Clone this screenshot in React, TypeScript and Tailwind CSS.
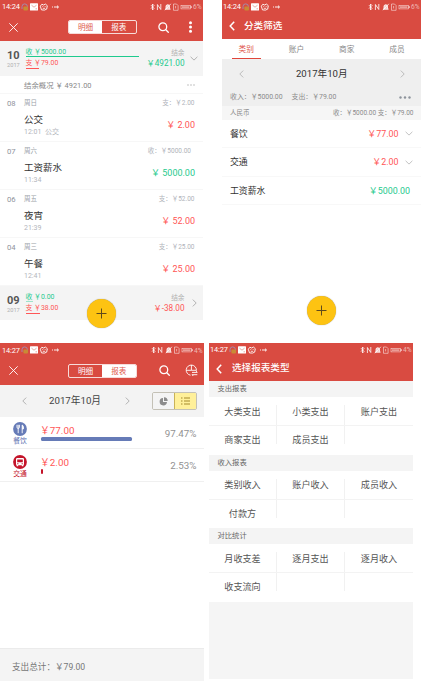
import type { ReactNode } from 'react';

const RED = 'bg-[#d94b41]';

function StatusBar({ time, battery, className = '' }: { time: string; battery: string; className?: string }) {
  return (
    <div className={`flex h-[13px] shrink-0 items-center pl-[2px] text-[7.4px] leading-none text-white ${className}`}>
      <span className="w-[19px] pt-px tracking-[-0.1px]">{time}</span>
      <svg className="h-2 w-[39px]" viewBox="0 0 39 8" fill="none">
        <path d="M1 6V3.6a2.7 2.7 0 0 1 5.4 0V6" stroke="#a58aa8" strokeWidth="1" />
        <rect x="2.4" y="3.6" width="4.6" height="3.8" rx="1" fill="#c98a35" />
        <rect x="9" y="0.2" width="8" height="7.4" rx="0.6" fill="#fff" />
        <path d="M10.5 2.2l2.5 2 2.5-2M14.5 5.8h1.5" stroke="#d98880" strokeWidth="0.7" />
        <path d="M19.3 3.2l1.6-2 1.6.8 2-.9 1.8 1.6-.6 3.4-2.2 1-3-.2z" stroke="#fff" strokeWidth="0.9" />
        <path d="M21.3 3.6h.9M23.7 3.6h.9M21.8 5.3h2.4" stroke="#fff" strokeWidth="0.8" />
        <path d="M31 4h1M33 4h4M36 2.7L37.6 4 36 5.3" stroke="#fff" strokeWidth="0.9" />
      </svg>
      <svg className="ml-auto h-2 w-[42px] shrink-0" viewBox="0 0 42 8" fill="none" stroke="#fff">
        <path d="M1 2.2l3 3.2L2.5 7V1L4 2.5 1 5.6" strokeWidth="0.8" />
        <path d="M7.4 7V1.5l3.4 5V1" strokeWidth="0.8" />
        <path d="M15.3 6.2h5l-.8-1V3.1a1.8 1.8 0 0 0-3.5 0v2.2zM15 7.2l5.8-6.4" fill="#fff" fillOpacity="0.7" strokeWidth="0.8" />
        <path d="M23.5 1h3l1.6 1.6v4.7h-4.6zM25.6 3v2.4" strokeWidth="0.6" strokeOpacity="0.85" />
        <rect x="31" y="2.3" width="9.4" height="3.6" strokeWidth="0.6" strokeOpacity="0.8" />
        <rect x="32" y="3.3" width="7.4" height="1.6" fill="#fff" fillOpacity="0.5" stroke="none" />
        <path d="M41.2 3.2v1.8" strokeWidth="0.8" />
      </svg>
      <span className="w-[11px] pt-[2px] pl-px text-[6.6px] text-white/60">{battery}</span>
    </div>
  );
}

function Close() {
  return (
    <svg className="h-[9px] w-[9px]" viewBox="0 0 9 9" fill="none" stroke="#fff" strokeWidth="0.9" strokeLinecap="round">
      <path d="M.6.6l7.8 7.8M8.4.6L.6 8.4" />
    </svg>
  );
}

function Search() {
  return (
    <svg className="h-[11px] w-[11px]" viewBox="0 0 11 11" fill="none" stroke="#fff" strokeWidth="1.3" strokeLinecap="round">
      <circle cx="4.8" cy="4.8" r="3.9" />
      <path d="M7.8 7.8l2.5 2.5" />
    </svg>
  );
}

function Chevron({ dir, className }: { dir: 'left' | 'right' | 'down'; className: string }) {
  if (dir === 'down') {
    return (
      <svg className={`h-[5px] w-2 ${className}`} viewBox="0 0 8 5" fill="none" stroke="currentColor" strokeWidth="0.9">
        <path d="M.6.8L4 4.1 7.4.8" />
      </svg>
    );
  }
  return (
    <svg className={`h-2 w-[5px] ${className}`} viewBox="0 0 5 8" fill="none" stroke="currentColor" strokeWidth="0.9">
      <path d={dir === 'left' ? 'M4.2.6L.8 4l3.4 3.4' : 'M.8.6L4.2 4 .8 7.4'} />
    </svg>
  );
}

function Toggle({ active }: { active: 0 | 1 }) {
  return (
    <div className="flex h-[14px] w-[68.5px] overflow-hidden rounded-[2px] border border-white/80 text-[7.6px]">
      {['明细', '报表'].map((t, i) => (
        <span
          key={t}
          className={`flex flex-1 items-center justify-center pt-px ${i === active ? 'bg-white text-[#e0594f]' : 'text-white'}`}
        >
          {t}
        </span>
      ))}
    </div>
  );
}

function Fab({ className }: { className: string }) {
  return (
    <div className={`absolute flex h-[29px] w-[29px] items-center justify-center rounded-full bg-[#fdc312] shadow-[0_0_1px_rgba(0,0,0,0.45)] ${className}`}>
      <svg className="h-[11px] w-[11px]" viewBox="0 0 11 11" stroke="#5f4a1c" strokeWidth="1">
        <path d="M5.5.5v10M.5 5.5h10" />
      </svg>
    </div>
  );
}

type Month = {
  month: string; income: string; expense: string; balance: string; balanceColor: string;
  incomeBar: string; expenseBar: string; arrow: 'down' | 'right';
};

function MonthSummary({ m, className }: { m: Month; className: string }) {
  return (
    <div className={`flex shrink-0 bg-[#f4f4f4] ${className}`}>
      <div className="w-[25.5px] pt-[8px] pl-[7px]">
        <div className="text-[11px] leading-[13px] font-bold text-[#555]">{m.month}</div>
        <div className="text-[5.7px] leading-[6px] text-[#b0b0b0]">2017</div>
      </div>
      <div className="w-[114px] pt-[7px] text-[6.9px] leading-[8px] whitespace-nowrap">
        <div className="text-[#1fca8e]">收 ￥{m.income}</div>
        <div className={`h-px bg-[#1fca8e] ${m.incomeBar}`} />
        <div className="pt-[2px] text-[#ff5656]">支 ￥{m.expense}</div>
        <div className={`mt-px h-px bg-[#ff5656] ${m.expenseBar}`} />
      </div>
      <div className="flex flex-1 flex-col items-end pt-[8px] whitespace-nowrap">
        <div className="text-[6.7px] leading-[9px] text-[#b0b0b0]">结余</div>
        <div className={`text-[8.2px] leading-[11px] ${m.balanceColor}`}>￥{m.balance}</div>
      </div>
      <div className="flex w-[18.5px] items-center justify-center pl-[1px]">
        <Chevron dir={m.arrow} className="text-[#aaa]" />
      </div>
    </div>
  );
}

const days = [
  { d: '08', w: '周日', total: '支：￥2.00', pad: 'pr-[8.5px]', name: '公交', sub: '12:01  公交', amount: '2.00', c: 'text-[#ff5656]' },
  { d: '07', w: '周六', total: '收：￥5000.00', pad: 'pr-[12px]', name: '工资薪水', sub: '11:34', amount: '5000.00', c: 'text-[#1fca8e]' },
  { d: '06', w: '周五', total: '支：￥52.00', pad: 'pr-[8.5px]', name: '夜宵', sub: '21:39', amount: '52.00', c: 'text-[#ff5656]' },
  { d: '04', w: '周三', total: '支：￥25.00', pad: 'pr-[8.5px]', name: '午餐', sub: '12:41', amount: '25.00', c: 'text-[#ff5656]' },
];

function DetailScreen() {
  return (
    <section className="relative flex h-[343px] w-[203px] shrink-0 flex-col">
      <header className={`h-[41px] shrink-0 ${RED}`}>
        <StatusBar time="14:24" battery="6%" />
        <div className="flex h-[28px] items-center pl-[9px]">
          <Close />
          <div className="ml-[50px]"><Toggle active={0} /></div>
          <div className="ml-[21px]"><Search /></div>
          <svg className="ml-[20px] h-3 w-[3px]" viewBox="0 0 3 12" fill="#fff">
            <circle cx="1.5" cy="1.7" r="1.5" /><circle cx="1.5" cy="6" r="1.5" /><circle cx="1.5" cy="10.3" r="1.5" />
          </svg>
        </div>
      </header>
      <MonthSummary
        className="h-[35px]"
        m={{ month: '10', income: '5000.00', expense: '79.00', balance: '4921.00', balanceColor: 'text-[#1fca8e]', incomeBar: 'w-[113.5px]', expenseBar: 'w-[13px]', arrow: 'down' }}
      />
      <div className="flex h-[18px] shrink-0 items-center border-b border-[#f7f7f7] pr-[8px] pl-[24px] text-[7.4px] text-[#888]">
        <span className="pt-[2px]">结余概况 ￥ 4921.00</span>
        <svg className="ml-auto h-[2px] w-[8px]" viewBox="0 0 8 2" fill="#bbb">
          <circle cx="1" cy="1" r="0.8" /><circle cx="4" cy="1" r="0.8" /><circle cx="7" cy="1" r="0.8" />
        </svg>
      </div>
      {days.map((x) => (
        <div key={x.d} className="h-12 shrink-0 border-b border-[#f7f7f7]">
          <div className="flex h-[18px] items-center pt-[2px] text-[6.5px] text-[#b0b3ba]">
            <span className="w-[24px] pl-[7px] text-[7.7px] text-[#8f939b]">{x.d}</span>
            <span className="text-[#9b9fa8]">{x.w}</span>
            <span className={`ml-auto ${x.pad}`}>{x.total}</span>
          </div>
          <div className="flex items-start pr-[8px] pl-[24px]">
            <div>
              <div className="pt-px text-[9.5px] leading-[14px] text-[#333]">{x.name}</div>
              <div className="text-[7px] leading-[10px] whitespace-pre text-[#b3b6bc]">{x.sub}</div>
            </div>
            <div className={`ml-auto pt-[7px] text-[9px] leading-[12px] ${x.c}`}>￥ {x.amount}</div>
          </div>
        </div>
      ))}
      <MonthSummary
        className="h-[34px]"
        m={{ month: '09', income: '0.00', expense: '38.00', balance: '-38.00', balanceColor: 'text-[#ff5656]', incomeBar: 'w-[7px] opacity-40', expenseBar: 'w-[14px]', arrow: 'right' }}
      />
      <Fab className="top-[299px] left-[87px]" />
    </section>
  );
}

function BackHeader({ title, className, titleGap, time, battery }: {
  title: string; className: string; titleGap: string; time: string; battery: string;
}) {
  return (
    <header className={`shrink-0 ${RED} ${className}`}>
      <StatusBar time={time} battery={battery} className="pl-px" />
      <div className="flex h-[25px] items-center pl-[7px] text-white">
        <svg className="h-[10px] w-[6px]" viewBox="0 0 6 10" fill="none" stroke="#fff" strokeWidth="1.5">
          <path d="M5.2.8L1.2 5l4 4.2" />
        </svg>
        <span className={`text-[9.6px] font-medium ${titleGap}`}>{title}</span>
      </div>
    </header>
  );
}

const categories = [
  { name: '餐饮', amount: '77.00', c: 'text-[#ff5656]', more: true },
  { name: '交通', amount: '2.00', c: 'text-[#ff5656]', more: true },
  { name: '工资薪水', amount: '5000.00', c: 'text-[#1fca8e]', more: false },
];

function FilterScreen() {
  return (
    <section className="relative flex h-[343px] w-[199px] shrink-0 flex-col">
      <BackHeader title="分类筛选" className="h-[39px]" titleGap="pt-px pl-[9px]" time="14:24" battery="6%" />
      <nav className="flex h-5 shrink-0 text-[7.7px] text-[#888]">
        {['类别', '账户', '商家', '成员'].map((t, i) => (
          <div key={t} className="flex w-[50.3px] shrink-0 flex-col items-center">
            <span className={`flex h-[18.6px] items-center pt-[2px] pr-[2px] ${i === 0 ? 'text-[#e0554b]' : ''}`}>{t}</span>
            {i === 0 && <span className="mr-[2px] h-[1.4px] w-[29px] bg-[#e0453b]" />}
          </div>
        ))}
      </nav>
      <div className="h-[47px] shrink-0 bg-[#efefef]">
        <div className="flex h-[29px] items-center justify-between pr-[16px] pl-[16.5px]">
          <Chevron dir="left" className="text-[#b5b5b5]" />
          <span className="pt-[2px] text-[9.6px] text-[#333]">2017年10月</span>
          <Chevron dir="right" className="text-[#b5b5b5]" />
        </div>
        <div className="flex h-[18px] items-center pt-px pr-[10px] pl-[8px] text-[6.9px] text-[#8b8b8b]">
          <span className="w-[61.5px] whitespace-nowrap">收入：￥5000.00</span>
          <span>支出：￥79.00</span>
          <svg className="mb-px ml-auto h-[3px] w-[12px]" viewBox="0 0 12 3" fill="#8d939b">
            <circle cx="1.5" cy="1.5" r="1.2" /><circle cx="6" cy="1.5" r="1.2" /><circle cx="10.5" cy="1.5" r="1.2" />
          </svg>
        </div>
      </div>
      <div className="flex h-[14px] shrink-0 items-center justify-between bg-[#f6f6f6] pt-px pr-[7.5px] pl-[8px] text-[6.5px] text-[#8b8b8b]">
        <span>人民币</span>
        <span>收：￥5000.00 支：￥79.00</span>
      </div>
      {categories.map((x) => (
        <div key={x.name} className="flex h-[28.4px] shrink-0 items-center border-b border-[#f8f8f8] pl-[8px] text-[8.9px]">
          <span className="pt-[2px] text-[#333]">{x.name}</span>
          <span className={`ml-auto pt-[2px] ${x.c} ${x.more ? '' : 'pr-[11px]'}`}>￥{x.amount}</span>
          {x.more && <span className="flex w-[22.5px] pl-[6px]"><Chevron dir="down" className="text-[#bbb]" /></span>}
        </div>
      ))}
      <Fab className="top-[295.5px] left-[85px]" />
    </section>
  );
}

function ReportRow({ icon, label, labelColor, amount, bar, percent }: {
  icon: ReactNode; label: string; labelColor: string; amount: string; bar: string; percent: string;
}) {
  return (
    <div className="flex h-[32.4px] shrink-0 items-center border-b border-[#f0f0f0] pt-[2px] pr-[7.5px]">
      <div className="flex w-[41px] shrink-0 flex-col items-center pr-px">
        {icon}
        <span className={`mt-[1px] text-[6.8px] leading-[8px] ${labelColor}`}>{label}</span>
      </div>
      <div className="flex-1 pt-[2px]">
        <div className="ml-[-1px] text-[9.8px] leading-[13px] text-[#ff5656]">￥{amount}</div>
        <div className={`h-[4.5px] rounded-[1.5px] ${bar}`} />
        <div className="h-[4px]" />
      </div>
      <span className="pt-px text-[9.8px] text-[#929292]">{percent}</span>
    </div>
  );
}

function ReportScreen() {
  return (
    <section className="flex h-[338px] w-[204px] shrink-0 flex-col">
      <header className={`h-[42px] shrink-0 ${RED}`}>
        <StatusBar time="14:27" battery="4%" className="pt-px" />
        <div className="flex h-[29px] items-center pl-[9px]">
          <Close />
          <div className="ml-[50px] pt-px"><Toggle active={1} /></div>
          <div className="ml-[22px]"><Search /></div>
          <svg className="ml-[15px] h-[13px] w-[13px]" viewBox="0 0 13 13" fill="none" stroke="#fff" strokeWidth="0.9">
            <path d="M5.5 11.2A5.1 5.1 0 1 1 11.4 6.6M6.4 1v5.3H1.3M6.4 6.3h5" />
            <path d="M7 8.4h5.3L11 7.2M12.3 10.7H7l1.3 1.3" />
          </svg>
        </div>
      </header>
      <div className="flex h-8 shrink-0 items-center bg-[#f3f3f3] pr-[7.5px] pl-[21.5px]">
        <Chevron dir="left" className="text-[#aaa]" />
        <span className="w-[98px] pt-px pl-[22.5px] text-[9.7px] whitespace-nowrap text-[#444]">2017年10月</span>
        <Chevron dir="right" className="text-[#aaa]" />
        <div className="ml-auto flex h-[18px] w-[45px] overflow-hidden rounded-[2px] border border-[#c4c1b6]">
          <span className="flex flex-1 items-center justify-center bg-[#f4f4f4]">
            <svg className="h-[9px] w-[9px]" viewBox="0 0 9 9" fill="#8c8c8c">
              <path d="M4 1v4h4A3.7 3.7 0 1 1 4 1zM5 .2A3.8 3.8 0 0 1 8.7 4H5z" />
            </svg>
          </span>
          <span className="flex flex-1 items-center justify-center border-l border-[#c9b258] bg-[#fff09a]">
            <svg className="h-2 w-[9px]" viewBox="0 0 9 8" stroke="#a58a2c" strokeWidth="1">
              <path d="M0 1h1.5M3 1h6M0 4h1.5M3 4h6M0 7h1.5M3 7h6" />
            </svg>
          </span>
        </div>
      </div>
      <ReportRow
        label="餐饮" labelColor="text-[#5c70b0]" amount="77.00" bar="w-[91px] bg-[#667bb7]" percent="97.47%"
        icon={
          <svg className="h-[14px] w-[14px]" viewBox="0 0 14 14" fill="none" stroke="#fff">
            <circle cx="7" cy="7" r="6.9" fill="#667bb7" stroke="none" />
            <path d="M4 2.8v2.6q0 1 1.2 1t1.2-1V2.8M5.2 2.8v8.4" strokeWidth="0.9" />
            <path d="M9.2 11.2V3c1.3.5 1.4 2.8 1.1 4H9.2" fill="#fff" strokeWidth="0.9" />
          </svg>
        }
      />
      <ReportRow
        label="交通" labelColor="text-[#c4142a]" amount="2.00" bar="w-[2px] bg-[#c4142a]" percent="2.53%"
        icon={
          <svg className="h-[14px] w-[14px]" viewBox="0 0 14 14">
            <circle cx="7" cy="7" r="6.9" fill="#c4142a" />
            <rect x="3" y="3" width="8" height="7.2" rx="1.2" fill="#fff" />
            <path d="M4.2 4.6h5.6v2.6H4.2zM4.2 8.3h1.2v.9H4.2zM8.6 8.3h1.2v.9H8.6z" fill="#c4142a" />
            <path d="M3.6 10h1.6v1.3H3.6zM8.8 10h1.6v1.3H8.8z" fill="#fff" />
          </svg>
        }
      />
      <footer className="mt-auto flex h-[33px] shrink-0 items-center border-t border-[#ebebeb] bg-[#f4f4f4] pt-[5px] pl-[12px] text-[8.6px] text-[#777]">
        支出总计：￥79.00
      </footer>
    </section>
  );
}

const groups = [
  { title: '支出报表', cells: ['大类支出', '小类支出', '账户支出', '商家支出', '成员支出', ''] },
  { title: '收入报表', cells: ['类别收入', '账户收入', '成员收入', '付款方', '', ''] },
  { title: '对比统计', cells: ['月收支差', '逐月支出', '逐月收入', '收支流向', '', ''] },
];

function TypeScreen() {
  return (
    <section className="flex h-[336px] w-[204px] shrink-0 flex-col bg-[#f5f5f5]">
      <BackHeader title="选择报表类型" className="h-[38px]" titleGap="pl-[10px]" time="14:27" battery="4%" />
      {groups.map((g) => (
        <div key={g.title} className="shrink-0">
          <div className="flex h-4 items-center bg-[#f4f4f4] pt-px pl-[8.5px] text-[7.3px] text-[#666]">{g.title}</div>
          <div className="grid grid-cols-3 gap-y-px bg-[#f3f3f3]">
            {g.cells.map((c, i) => (
              <div key={i} className="flex h-[28.3px] items-center bg-white text-[9.1px] text-[#555]">
                <span className={`flex-1 text-center ${i < 3 ? 'pt-[3px]' : 'pt-px'}`}>{c}</span>
                {i % 3 < 2 && <span className={`w-px bg-[#f1f1f1] ${i < 3 ? 'h-5 self-end' : 'h-[18px] self-start'}`} />}
              </div>
            ))}
          </div>
        </div>
      ))}
    </section>
  );
}

export default function App() {
  return (
    <main className="flex h-[681px] w-[421px] flex-col overflow-hidden bg-white font-['Roboto','Noto_Sans_CJK_SC',sans-serif]">
      <div className="flex h-[343px] shrink-0 justify-between">
        <DetailScreen />
        <FilterScreen />
      </div>
      <div className="flex h-[338px] gap-[5px]">
        <ReportScreen />
        <TypeScreen />
      </div>
    </main>
  );
}
